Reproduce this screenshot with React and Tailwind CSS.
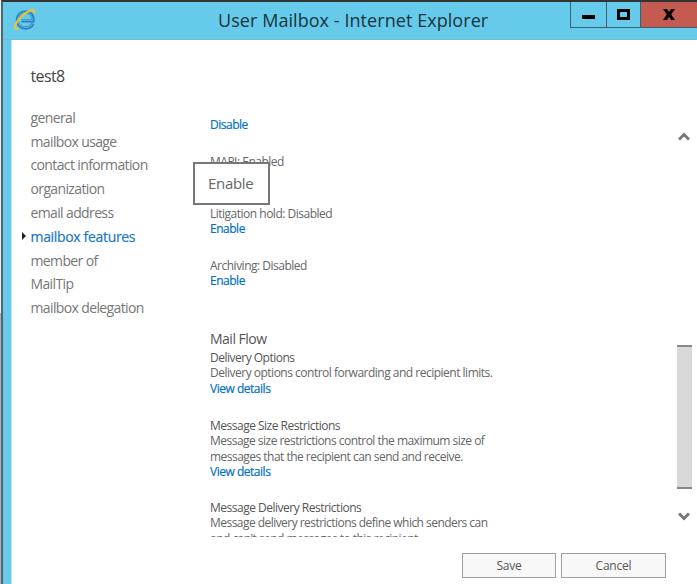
const navItems = [
    "general",
    "mailbox usage",
    "contact information",
    "organization",
    "email address",
    "mailbox features",
    "member of",
    "MailTip",
    "mailbox delegation",
];

function ExplorerLogo() {
    return (
        <svg className="h-[22px] w-[22px]" viewBox="0 0 22 22" fill="none">
            <path
                d="M19 14.500C17.500 17.500 15 19 11.500 19C6.500 19 3.300 15.800 3.300 11.200C3.300 6.200 6.700 3 11.500 3C16.500 3 19.500 6.300 19 11.800H7.500"
                stroke="#2d83c0"
                strokeWidth="3.300"
            />
            <path
                d="M18.300 14.800C17 17.300 14.800 18.400 11.500 18.400C7 18.400 4 15.500 4 11.200C4 6.700 7 3.700 11.500 3.700C15.800 3.700 18.500 6.500 18.300 11.300H7.500"
                stroke="#5aaedf"
                strokeWidth="1.200"
            />
            <path
                d="M4.500 19.300C-.5 21.500 .3 15.500 5.500 9.500C10 3.700 18.500 -.5 20 1.700C20.600 2.600 20.300 3.700 19.900 4.700"
                stroke="#f3c323"
                strokeWidth="2"
            />
        </svg>
    );
}

function TitleBar() {
    return (
        <header className="flex h-[38px] border-b border-[#79b9d1] bg-[#66cbea]">
            <div className="w-[215px] pl-[11px] pt-[7px]">
                <ExplorerLogo />
            </div>
            <h1 className="flex-1 whitespace-nowrap pt-[5px] text-[18px] leading-[26px] tracking-[0.06px] text-[#17333d]">
                User Mailbox - Internet Explorer
            </h1>
            <div className="flex h-[26px] w-[127px] border-b border-l border-[#3c6170]">
                <div className="flex w-[36px] justify-center border-r border-[#3c6170] pt-[13px]">
                    <span className="h-[4px] w-[13px] bg-black" />
                </div>
                <div className="flex w-[34px] justify-center border-r border-[#3c6170] pt-[7px]">
                    <span className="h-[11px] w-[13px] border-[3px] border-black" />
                </div>
                <div className="flex flex-1 justify-center bg-[#c45a50] pt-[7px]">
                    <svg className="h-[11px] w-[12px]" viewBox="0 0 12 11">
                        <path
                            d="M0 0H4L6 3L8 0H12L8.200 5.400L12 11H8L6 7.800L4 11H0L3.800 5.400Z"
                            fill="#000"
                        />
                    </svg>
                </div>
            </div>
        </header>
    );
}

function Sidebar() {
    return (
        <nav className="w-[198px] pl-[10px] pt-[25px]">
            <h2 className="pl-[8.500px] text-[16px] leading-[22px] tracking-[-0.6px] text-[#444]">
                test8
            </h2>
            <ul className="mt-[18.500px] text-[14px] tracking-[-0.63px] text-[#777]">
                {navItems.map((item) => (
                    <li
                        key={item}
                        className="flex h-[23.800px] items-center whitespace-nowrap"
                    >
                        <span className="w-[8.500px]">
                            {item === "mailbox features" && (
                                <svg
                                    className="h-[8px] w-[4px]"
                                    viewBox="0 0 4 8"
                                >
                                    <path d="M0 0L4 4L0 8Z" fill="#222" />
                                </svg>
                            )}
                        </span>
                        <span
                            className={
                                item === "mailbox features"
                                    ? "tracking-[-0.33px] text-[#1978c2] [-webkit-text-stroke:0.2px_#1978c2]"
                                    : ""
                            }
                        >
                            {item}
                        </span>
                    </li>
                ))}
            </ul>
        </nav>
    );
}

function Action({ children }) {
    return (
        <a className="block tracking-[-0.48px] text-[#0072c6] [-webkit-text-stroke:0.2px_#0072c6]">
            {children}
        </a>
    );
}

function Features() {
    return (
        <section className="h-[497px] w-[466px] overflow-hidden pt-[77px] text-[12px] leading-[15.500px] tracking-[-0.5px] text-[#666]">
            <Action>Disable</Action>
            <p className="mt-[21.500px]">MAPI: Enabled</p>
            <div className="mt-[36px]">
                <p>Litigation hold: Disabled</p>
                <Action>Enable</Action>
            </div>
            <div className="mt-[21px]">
                <p>Archiving: Disabled</p>
                <Action>Enable</Action>
            </div>
            <h3 className="mt-[40px] text-[14px] leading-[20px] text-[#555]">
                Mail Flow
            </h3>
            <div className="mt-[1px] whitespace-nowrap">
                <h4 className="text-[#555]">Delivery Options</h4>
                <p>Delivery options control forwarding and recipient limits.</p>
                <Action>View details</Action>
            </div>
            <div className="mt-[21.500px] whitespace-nowrap">
                <h4 className="text-[#555]">Message Size Restrictions</h4>
                <p className="tracking-[-0.52px]">
                    Message size restrictions control the maximum size of
                    <br />
                    messages that the recipient can send and receive.
                </p>
                <Action>View details</Action>
            </div>
            <div className="mt-[20px] whitespace-nowrap">
                <h4 className="text-[#555]">Message Delivery Restrictions</h4>
                <p className="tracking-[-0.54px]">
                    Message delivery restrictions define which senders can
                    <br />
                    and can't send messages to this recipient.
                </p>
            </div>
        </section>
    );
}

function Scrollbar() {
    return (
        <div className="flex w-[16px] flex-col items-center">
            <svg
                className="mt-[92px] h-[9px] w-[12px]"
                viewBox="0 0 12 9"
                fill="none"
            >
                <path d="M1 7.500L6 2.500L11 7.500" stroke="#777" strokeWidth="3" />
            </svg>
            <div className="mt-[204px] h-[144px] w-[15px] border-y-2 border-[#888] bg-[#d9d9d9]" />
            <svg
                className="mt-[23px] h-[9px] w-[12px]"
                viewBox="0 0 12 9"
                fill="none"
            >
                <path d="M1 1.500L6 6.500L11 1.500" stroke="#777" strokeWidth="3" />
            </svg>
        </div>
    );
}

export default function App() {
    return (
        <div className="relative flex h-[584px] w-[697px] overflow-hidden bg-white font-['Open_Sans','Noto_Sans',sans-serif]">
            <div className="flex w-[1px] flex-col">
                <div className="h-[313px] bg-[#eee]" />
                <div className="flex-1 bg-[#b4b0b8]" />
            </div>
            <div className="flex flex-1 flex-col border-l-2 border-t-2 border-[#4e6873] border-t-[#333]">
                <TitleBar />
                <main className="flex h-[544px] border-l-[8px] border-[#66cbea] bg-white">
                    <div className="w-px bg-[#bce7f5]" />
                    <Sidebar />
                    <div>
                        <div className="flex">
                            <Features />
                            <Scrollbar />
                        </div>
                        <div className="mt-[16px] flex gap-[5px] pl-[252px] text-[12px] tracking-[-0.2px] text-[#555]">
                            <button className="h-[25px] w-[94px] border border-[#98a3a6] bg-[#f8f8f8]">
                                Save
                            </button>
                            <button className="h-[25px] w-[105px] border border-[#98a3a6] bg-[#f8f8f8]">
                                Cancel
                            </button>
                        </div>
                    </div>
                </main>
            </div>
            {/* tooltip over the MAPI row */}
            <div className="absolute left-[193px] top-[162px] h-[43px] w-[77px] border-2 border-[#777] bg-white pl-[13px] text-[15px] leading-[39px] tracking-[-0.300px] text-[#666]">
                Enable
            </div>
        </div>
    );
}
